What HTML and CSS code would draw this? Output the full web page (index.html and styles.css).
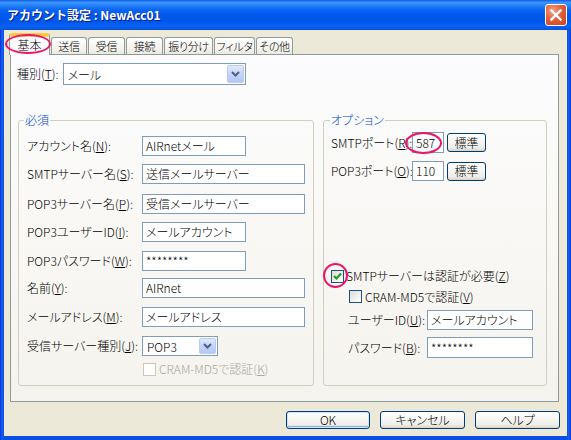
FILE: index.html
```html
<!DOCTYPE html>
<html lang="ja">
<head>
<meta charset="utf-8">
<title>アカウント設定</title>
<link rel="stylesheet" href="styles.css">
</head>
<body>
<div class="window">
  <div class="titlebar">
    <span class="title">アカウント設定 : NewAcc01</span>
    <span class="close"><svg width="12" height="12" viewBox="0 0 12 12"><path d="M1.5 1.5 L10.5 10.5 M10.5 1.5 L1.5 10.5" stroke="#fff" stroke-width="2.4" stroke-linecap="square"/></svg></span>
  </div>
  <div class="client">
    <div class="tabs">
      <div class="tab active">基本</div>
      <div class="tab w36">送信</div>
      <div class="tab w37">受信</div>
      <div class="tab w37">接続</div>
      <div class="tab w49">振り分け</div>
      <div class="tab w41">フィルタ</div>
      <div class="tab w37">その他</div>
    </div>
    <div class="panel">
      <div class="kind-row">
        <span class="lbl">種別(<u>T</u>):</span>
        <div class="combo combo-kind"><span class="combo-text">メール</span><span class="drop"><svg width="9" height="6" viewBox="0 0 9 6"><path d="M1 1 L4.5 4.5 L8 1" fill="none" stroke="#4D6185" stroke-width="2"/></svg></span></div>
      </div>
      <div class="groups">
        <fieldset class="group req">
          <legend>必須</legend>
          <div class="req-grid">
            <span class="lbl">アカウント名(<u>N</u>):</span>
            <div class="field short">AIRnetメール</div>
            <span class="lbl">SMTPサーバー名(<u>S</u>):</span>
            <div class="field long">送信メールサーバー</div>
            <span class="lbl">POP3サーバー名(<u>P</u>):</span>
            <div class="field long">受信メールサーバー</div>
            <span class="lbl">POP3ユーザーID(<u>I</u>):</span>
            <div class="field short">メールアカウント</div>
            <span class="lbl">POP3パスワード(<u>W</u>):</span>
            <div class="field short">********</div>
            <span class="lbl">名前(<u>Y</u>):</span>
            <div class="field long">AIRnet</div>
            <span class="lbl">メールアドレス(<u>M</u>):</span>
            <div class="field long">メールアドレス</div>
            <span class="lbl">受信サーバー種別(<u>J</u>):</span>
            <div class="combo combo-type"><span class="combo-text">POP3</span><span class="drop"><svg width="9" height="6" viewBox="0 0 9 6"><path d="M1 1 L4.5 4.5 L8 1" fill="none" stroke="#4D6185" stroke-width="2"/></svg></span></div>
            <span></span>
            <div class="check-row disabled"><span class="cbox cbox-off"></span><span>CRAM-MD5で認証(<u>K</u>)</span></div>
          </div>
        </fieldset>
        <fieldset class="group opt">
          <legend>オプション</legend>
          <div class="port-row">
            <span class="lbl port-lbl">SMTPポート(<u>R</u>):</span>
            <div class="field port">587</div>
            <button class="xpbtn std">標準</button>
          </div>
          <div class="port-row second">
            <span class="lbl port-lbl">POP3ポート(<u>O</u>):</span>
            <div class="field port">110</div>
            <button class="xpbtn std">標準</button>
          </div>
          <div class="check-row auth"><span class="cbox"><svg width="11" height="11" viewBox="0 0 11 11"><path d="M2 5 L4.5 7.5 L9 2.5" fill="none" stroke="#21A121" stroke-width="2.2"/></svg></span><span>SMTPサーバーは認証が必要(<u>Z</u>)</span></div>
          <div class="check-row cram"><span class="cbox"></span><span>CRAM-MD5で認証(<u>V</u>)</span></div>
          <div class="auth-row">
            <span class="lbl auth-lbl">ユーザーID(<u>U</u>):</span>
            <div class="field auth-field">メールアカウント</div>
          </div>
          <div class="auth-row">
            <span class="lbl auth-lbl">パスワード(<u>B</u>):</span>
            <div class="field auth-field tall">********</div>
          </div>
        </fieldset>
      </div>
    </div>
    <div class="buttons">
      <button class="xpbtn dlg default">OK</button>
      <button class="xpbtn dlg">キャンセル</button>
      <button class="xpbtn dlg">ヘルプ</button>
    </div>
  </div>
  <span class="mark mark-tab"></span>
  <span class="mark mark-port"></span>
  <span class="mark mark-check"></span>
</div>
</body>
</html>
```

FILE: styles.css
```css
* { box-sizing: border-box; }
html, body { margin: 0; padding: 0; }
body {
  width: 571px;
  height: 440px;
  overflow: hidden;
  font-family: "Noto Sans CJK JP", "Noto Sans", sans-serif;
  font-size: 12px;
  font-weight: 300;
  font-feature-settings: "palt";
  color: #000;
}
u { text-decoration: underline; text-underline-offset: 1px; }

.window {
  position: relative;
  width: 571px;
  height: 440px;
  background: linear-gradient(to right, #0831D9 0, #1660F0 2px, #0B4EE6 4px, #0B4EE6 567px, #1660F0 569px, #0831D9 571px);
  display: flex;
  flex-direction: column;
}

.titlebar {
  height: 30px;
  flex: none;
  display: flex;
  align-items: center;
  justify-content: space-between;
  padding: 0 4px 0 7px;
  background: linear-gradient(to bottom, #0A5AE6 0%, #3D95FF 8%, #2A87FA 16%, #0C66F2 32%, #0058EE 50%, #0056EA 72%, #0763F5 86%, #0552D7 100%);
}
.title {
  color: #fff;
  font-weight: bold;
  font-size: 12px;
  line-height: 14px;
  text-shadow: 1px 1px 0 #0A1E8C;
  font-feature-settings: normal;
  white-space: pre;
}
.close {
  width: 22px;
  height: 22px;
  border: 1px solid #fff;
  border-radius: 3px;
  background: radial-gradient(circle at 35% 30%, #F2A286 0%, #E2613C 45%, #C8401C 100%);
  display: flex;
  align-items: center;
  justify-content: center;
}

.client {
  flex: 1;
  margin: 0 4px 4px;
  background: #ECE9D8;
  display: flex;
  flex-direction: column;
  padding: 3px 0 7px 6px;
}

.tabs {
  display: flex;
  align-items: flex-end;
  height: 22px;
  margin-bottom: -1px;
  position: relative;
  z-index: 1;
}
.tab {
  height: 17px;
  margin-bottom: 1px;
  margin-left: 1px;
  padding: 0;
  border: 1px solid #919B9C;
  border-bottom: none;
  border-radius: 3px 3px 0 0;
  background: linear-gradient(to bottom, #FFFFFF, #F3F2EC 70%, #E9E8E1);
  font-size: 11px;
  line-height: 16px;
  white-space: nowrap;
  text-align: center;
  letter-spacing: -0.3px;
  overflow: hidden;
}
.tab.w36 { width: 36px; }
.tab.w37 { width: 37px; }
.tab.w41 { width: 41px; }
.tab.w49 { width: 49px; }
.tab.active {
  width: 41px;
  height: 22px;
  margin-bottom: 0;
  margin-left: -1px;
  border-top: 3px solid #FFC83C;
  box-shadow: inset 0 1px 0 #FBD770;
  background: #FCFCFE;
  font-size: 12px;
  line-height: 17px;
  letter-spacing: 0;
}

.panel {
  width: 549px;
  height: 348px;
  border: 1px solid #919B9C;
  background: linear-gradient(to bottom, #FCFCFE 0%, #F8F7F3 60%, #F4F3EE 100%);
  padding: 8px 0 0 6px;
}

.kind-row {
  display: flex;
  align-items: center;
  gap: 4px;
}
.lbl {
  white-space: nowrap;
  line-height: 20px;
}

.combo {
  display: flex;
  align-items: stretch;
  justify-content: space-between;
  border: 1px solid #7F9DB9;
  background: #fff;
  padding: 1px;
}
.combo-kind { width: 183px; height: 22px; }
.combo-type { width: 76px; height: 20px; }
.combo-text { padding-left: 3px; line-height: 18px; }
.combo-kind .combo-text { line-height: 19px; }
.drop {
  width: 17px;
  border: 1px solid #B9CBF3;
  border-radius: 2px;
  background: linear-gradient(to bottom, #E1EAFE, #C4D4FA 50%, #B4C8F6);
  display: flex;
  align-items: center;
  justify-content: center;
}

.groups {
  display: flex;
  gap: 9px;
  margin: 28px 0 0 1px;
  height: 273px;
}
.group {
  margin: 0;
  border: 1px solid #D0D0BF;
  border-radius: 3px;
  height: 273px;
  min-width: 0;
}
.group legend {
  color: #0046D5;
  font-size: 12px;
  line-height: 14px;
  padding: 0 1px;
}
.req {
  width: 296px;
  padding: 9px 7px 0 8px;
}
.req legend { margin-left: -3px; }
.opt {
  width: 224px;
  padding: 5px 7px 0 7px;
}
.opt legend { margin-left: -1px; }

.req-grid {
  display: grid;
  grid-template-columns: 115px auto;
  grid-template-rows: 28px 30px 28px 29px 27px 29px 29px 26px 14px;
  align-items: start;
}

.field {
  height: 20px;
  border: 1px solid #7F9DB9;
  background: #fff;
  padding-left: 3px;
  line-height: 18px;
  white-space: nowrap;
  overflow: hidden;
}
.field.short { width: 104px; }
.field.long { width: 163px; }

.check-row {
  display: flex;
  align-items: center;
  gap: 3px;
  height: 14px;
  line-height: 14px;
  white-space: nowrap;
}
.check-row.disabled { color: #ACA899; padding-left: 1px; }
.cbox {
  width: 13px;
  height: 13px;
  flex: none;
  border: 1px solid #1C5180;
  background: linear-gradient(135deg, #DCDCD7 0%, #F2F2EE 60%, #FFFFFF 100%);
  display: flex;
  align-items: center;
  justify-content: center;
}
.cbox-off {
  border-color: #CAC8BB;
  background: #fff;
}

.port-row {
  display: flex;
  align-items: center;
  height: 21px;
}
.port-row.second { margin-top: 8px; height: 20px; }
.port-lbl { width: 81px; }
.field.port { width: 32px; height: 21px; line-height: 19px; }
.port-row.second .field.port { height: 20px; line-height: 18px; }

.xpbtn {
  font-family: inherit;
  font-size: 12px;
  font-weight: 300;
  font-feature-settings: "palt";
  color: #000;
  border: 1px solid #003C74;
  border-radius: 3px;
  background: linear-gradient(to bottom, #FFFFFF 0%, #F7F7F4 40%, #EEEDE6 80%, #D8D3C8 100%);
  padding: 0;
  line-height: 16px;
}
.std {
  width: 39px;
  height: 19px;
  margin-left: 3px;
}

.check-row.auth { margin-top: 88px; gap: 2px; }
.check-row.cram { margin-top: 7px; margin-left: 18px; height: 13px; }

.auth-row {
  display: flex;
  align-items: center;
  margin-top: 7px;
  margin-left: 17px;
}
.auth-lbl { width: 79px; }
.field.auth-field { width: 106px; }
.field.tall { height: 21px; line-height: 19px; }

.buttons {
  display: flex;
  justify-content: flex-end;
  gap: 10px;
  margin-top: 9px;
  padding-right: 7px;
}
.dlg {
  width: 85px;
  height: 18px;
}
.dlg.default {
  width: 84px;
  box-shadow: inset 0 0 0 1px #CEE7FF, inset 0 -1px 0 1px #89ADE4;
}

.mark {
  position: absolute;
  z-index: 5;
  border: 2px solid #EC1666;
  border-radius: 50%;
  pointer-events: none;
}
.mark-tab { left: 5px; top: 34px; width: 46px; height: 20px; }
.mark-port { left: 405px; top: 132px; width: 37px; height: 22px; }
.mark-check { left: 323px; top: 263px; width: 25px; height: 25px; }
```
